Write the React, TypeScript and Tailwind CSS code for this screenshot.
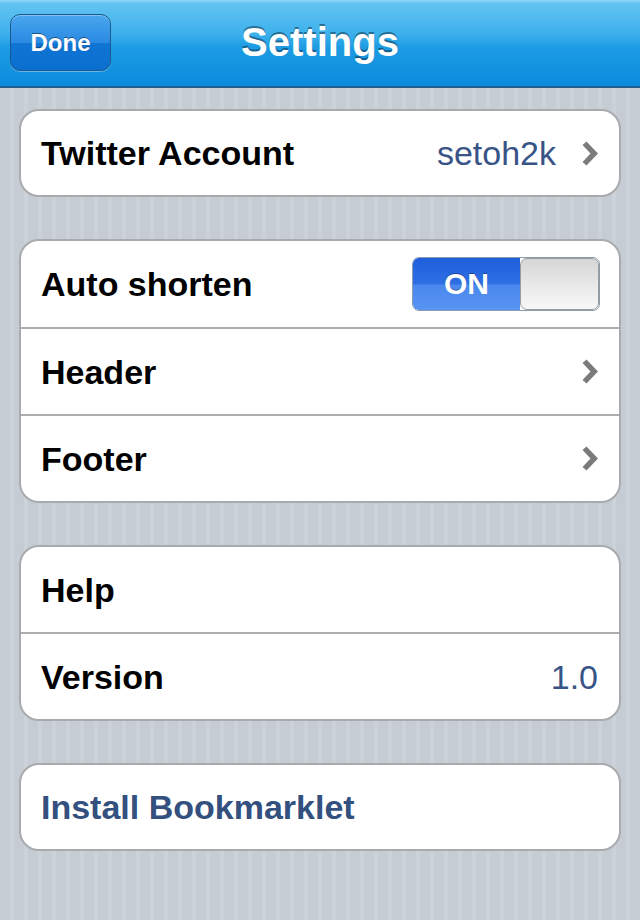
import React from "react";

const Chevron = () => (
  <svg width="16" height="25" viewBox="0 0 16 25" className="shrink-0">
    <polygon points="0.5,4 4.5,0.5 16,12.5 4.5,24.5 0.5,21 8.5,12.5" fill="#7b7b7b" />
  </svg>
);

const Row = ({ children, first, h = "h-[87px]" }: { children: React.ReactNode; first?: boolean; h?: string }) => (
  <div className={`flex items-center justify-between pl-[20px] pr-[21px] ${first ? "" : "border-t-2 border-[#adadad]"} ${h}`}>
    {children}
  </div>
);

const Label = ({ children }: { children: React.ReactNode }) => (
  <span className="text-[34px] font-bold text-black leading-none">{children}</span>
);

export default function App() {
  return (
    <div className="w-[640px] h-[920px] overflow-hidden font-['Liberation_Sans',Arial,sans-serif] bg-[repeating-linear-gradient(90deg,#c5ccd4_0px,#c5ccd4_10px,#cbd2d8_10px,#cbd2d8_14px)]">
      {/* Nav bar */}
      <div className="relative h-[88px] flex items-center justify-center border-b-2 border-[#1f5d8c] bg-[linear-gradient(to_bottom,#8cd6f8_0px,#62c3f2_4px,#3cb0ec_40%,#1d9ce4_55%,#0a8adb_100%)]">
        <div className="absolute left-[10px] top-[14px] w-[101px] h-[57px] rounded-[10px] border border-[#1b5a8e] bg-[linear-gradient(to_bottom,#4aa6ee_0%,#2a8ae2_50%,#0f74d4_52%,#0b6fd0_100%)] shadow-[0_1px_0_rgba(255,255,255,0.35),inset_0_1px_0_rgba(255,255,255,0.3)] flex items-center justify-center">
          <span className="text-[24px] font-bold text-white [text-shadow:0_-1px_0_rgba(0,0,0,0.45)]">Done</span>
        </div>
        <span className="text-[40px] font-bold text-white leading-none -mt-[2px] [text-shadow:0_-2px_0_rgba(0,0,0,0.4)]">Settings</span>
      </div>

      <div className="flex flex-col gap-[42px] pt-[21px] px-[19px]">
        {/* Card 1 */}
        <div className="bg-white border-2 border-[#a8aaad] rounded-[20px] overflow-hidden">
          <Row first h="h-[84px]">
            <Label>Twitter Account</Label>
            <div className="flex items-center gap-[26px]">
              <span className="text-[34px] text-[#385487] leading-none">setoh2k</span>
              <Chevron />
            </div>
          </Row>
        </div>

        {/* Card 2 */}
        <div className="bg-white border-2 border-[#a8aaad] rounded-[20px] overflow-hidden">
          <Row first h="h-[86px]">
            <Label>Auto shorten</Label>
            <div className="flex w-[188px] h-[54px] -mr-[2px] rounded-[7px] overflow-hidden border border-[#8e9aae]">
              <div className="w-[107px] h-full flex items-center justify-center bg-[linear-gradient(to_bottom,#1f5edb_0%,#2f6fe3_50%,#4a88ee_52%,#5894f1_100%)]">
                <span className="text-[30px] font-bold text-white leading-none [text-shadow:0_-1px_0_rgba(0,0,0,0.35)]">ON</span>
              </div>
              <div className="flex-1 h-full rounded-[7px] border border-[#9c9c9c] bg-[linear-gradient(to_bottom,#d6d6d6_0%,#e8e8e8_50%,#f8f8f8_100%)]"></div>
            </div>
          </Row>
          <Row>
            <Label>Header</Label>
            <Chevron />
          </Row>
          <Row>
            <Label>Footer</Label>
            <Chevron />
          </Row>
        </div>

        {/* Card 3 */}
        <div className="bg-white border-2 border-[#a8aaad] rounded-[20px] overflow-hidden">
          <Row first h="h-[85px]">
            <Label>Help</Label>
          </Row>
          <Row>
            <Label>Version</Label>
            <span className="text-[34px] text-[#385487] leading-none">1.0</span>
          </Row>
        </div>

        {/* Card 4 */}
        <div className="bg-white border-2 border-[#a8aaad] rounded-[20px] overflow-hidden">
          <Row first h="h-[84px]">
            <span className="text-[34px] font-bold text-[#33507f] leading-none">Install Bookmarklet</span>
          </Row>
        </div>
      </div>
    </div>
  );
}
